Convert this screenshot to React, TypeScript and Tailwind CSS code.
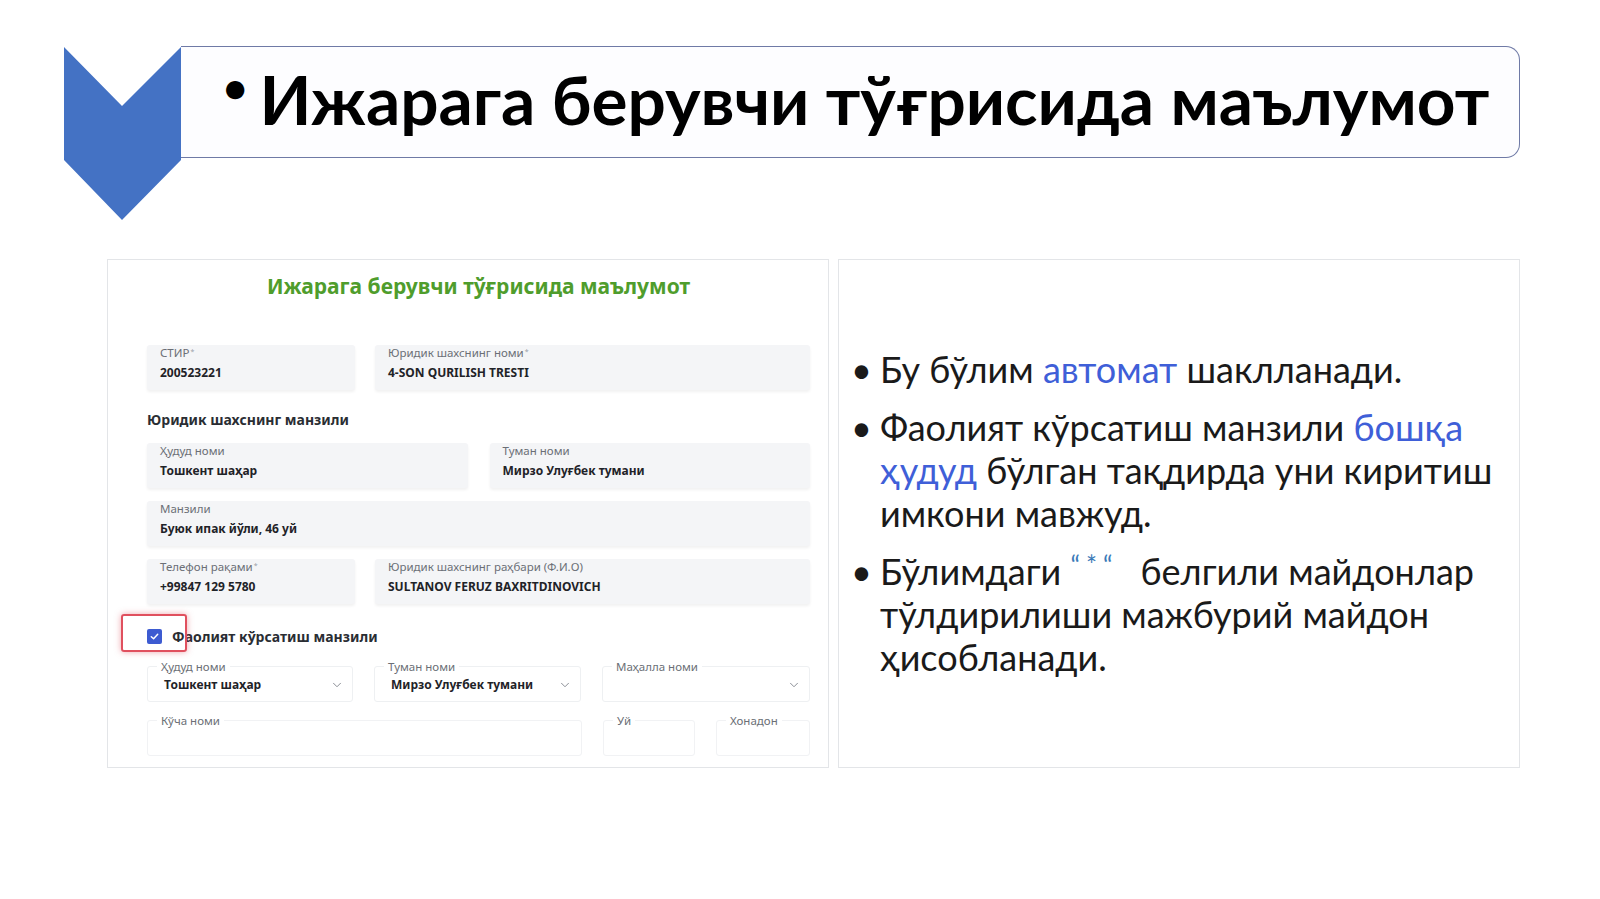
import { ChevronDown } from "lucide-react";

const formFont = { fontFamily: '"Noto Sans", "Open Sans", sans-serif' };

function Req() {
  return <sup className="text-[7px] text-[#9aa0a8] ml-[1px]">*</sup>;
}

function Field({ label, value, req = false, className = "" }: { label: string; value: string; req?: boolean; className?: string }) {
  return (
    <div className={`h-[45px] rounded-[3px] bg-[#f4f5f7] shadow-[0_2px_3px_rgba(0,0,0,0.06)] pl-[13px] pt-[1px] ${className}`}>
      <div className="text-[11.5px] leading-[14px] text-[#6b6f76]">
        {label}
        {req && <Req />}
      </div>
      <div className="mt-[5px] text-[12px] leading-[15px] font-bold text-[#1f2328]">{value}</div>
    </div>
  );
}

function SelectField({ label, value, className = "" }: { label: string; value: string; className?: string }) {
  return (
    <div className={`relative h-[36px] mt-[6px] border border-[#eef0f2] rounded-[3px] ${className}`}>
      <span className="absolute -top-[8px] left-[9px] bg-white px-[4px] text-[11.5px] leading-[15px] text-[#6b6f76]">{label}</span>
      <div className="flex h-full items-center justify-between pl-[16px] pr-[8px] pt-[2px]">
        <span className="text-[12px] font-bold text-[#1f2328]">{value}</span>
        <ChevronDown className="h-[14px] w-[14px] text-[#7a7f87]" strokeWidth={1.5} />
      </div>
    </div>
  );
}

function EmptyField({ label, className = "" }: { label: string; className?: string }) {
  return (
    <div className={`relative h-[36px] mt-[6px] border border-[#f1f2f4] rounded-[3px] ${className}`}>
      <span className="absolute -top-[8px] left-[9px] bg-white px-[4px] text-[11.5px] leading-[15px] text-[#6b6f76]">{label}</span>
    </div>
  );
}

export default function App() {
  return (
    <div className="w-[1600px] h-[899px] bg-white overflow-hidden relative">
      {/* header */}
      <div className="flex pl-[64px] pt-[46px] pr-[80px]">
        <svg width="117" height="174" viewBox="0 0 117 174" className="shrink-0">
          <polygon points="0,1 58,60 117,1 117,114 58,174 0,114" fill="#4472c4" />
        </svg>
        <div className="flex-1 h-[112px] border border-l-0 border-[#6f7aa6] rounded-r-[14px] bg-[#fdfdff] flex items-center pl-[42px]" style={{ fontFamily: 'Lato, "Noto Sans", sans-serif' }}>
          <span className="text-[42px] leading-none font-bold text-black mr-[12px] -mt-[30px]">•</span>
          <span className="text-[67.5px] leading-none font-bold text-black -mt-[6px]">Ижарага берувчи тўғрисида маълумот</span>
        </div>
      </div>

      {/* panels */}
      <div className="flex pl-[107px] mt-[39px] gap-[9px]">
        <div className="relative w-[722px] h-[509px] border border-[#e3e5e8] pl-[39px] pr-[18px]" style={formFont}>
          <div className="mt-[12px] text-center text-[21px] leading-[28px] font-bold text-[#4f9d2c]">Ижарага берувчи тўғрисида маълумот</div>

          <div className="mt-[45px] flex gap-[20px]">
            <Field className="w-[208px]" label="СТИР" req value="200523221" />
            <Field className="flex-1" label="Юридик шахснинг номи" req value="4-SON QURILISH TRESTI" />
          </div>

          <div className="mt-[20px] text-[14px] leading-[20px] font-bold text-[#2a2d33]">Юридик шахснинг манзили</div>

          <div className="mt-[13px] flex gap-[22px]">
            <Field className="flex-1" label="Ҳудуд номи" value="Тошкент шаҳар" />
            <Field className="flex-1" label="Туман номи" value="Мирзо Улуғбек тумани" />
          </div>

          <Field className="mt-[13px]" label="Манзили" value="Буюк ипак йўли, 46 уй" />

          <div className="mt-[13px] flex gap-[20px]">
            <Field className="w-[208px]" label="Телефон рақами" req value="+99847 129 5780" />
            <Field className="flex-1" label="Юридик шахснинг раҳбари (Ф.И.О)" value="SULTANOV FERUZ BAXRITDINOVICH" />
          </div>

          <div className="mt-[22px] flex items-center h-[20px]">
            <span className="w-[15px] h-[15px] bg-[#3d5bd1] rounded-[2px] flex items-center justify-center mr-[10px]">
              <svg width="11" height="11" viewBox="0 0 12 12">
                <polyline points="2.5,6.2 5,8.5 9.5,3.5" fill="none" stroke="#fff" strokeWidth="1.6" strokeLinecap="round" strokeLinejoin="round" />
              </svg>
            </span>
            <span className="text-[14px] font-bold text-[#2a2d33]">Фаолият кўрсатиш манзили</span>
          </div>
          <div className="absolute left-[13px] top-[354px] w-[66px] h-[38px] border-2 border-[#e0505e] rounded-[3px] shadow-[0_0_6px_rgba(224,80,94,0.5)]" />

          <div className="mt-[14px] flex gap-[21px]">
            <SelectField className="w-[206px]" label="Ҳудуд номи" value="Тошкент шаҳар" />
            <SelectField className="w-[207px]" label="Туман номи" value="Мирзо Улуғбек тумани" />
            <SelectField className="flex-1" label="Маҳалла номи" value="" />
          </div>

          <div className="mt-[12px] flex gap-[21px]">
            <EmptyField className="w-[435px]" label="Кўча номи" />
            <EmptyField className="w-[92px]" label="Уй" />
            <EmptyField className="flex-1" label="Хонадон" />
          </div>
        </div>

        <div className="w-[682px] h-[509px] border border-[#e3e5e8] pl-[12px] pt-[88px]" style={{ fontFamily: 'Lato, "Noto Sans", sans-serif' }}>
          <ul className="text-[36px] leading-[43px] text-[#1a1a1a] space-y-[15px] pr-[20px]">
            <li className="flex">
              <span className="w-[29px] shrink-0">•</span>
              <span>Бу бўлим <span className="text-[#3f5fd8]">автомат</span> шаклланади.</span>
            </li>
            <li className="flex">
              <span className="w-[29px] shrink-0">•</span>
              <span>Фаолият кўрсатиш манзили <span className="text-[#3f5fd8]">бошқа ҳудуд</span> бўлган тақдирда уни киритиш имкони мавжуд.</span>
            </li>
            <li className="flex">
              <span className="w-[29px] shrink-0">•</span>
              <span>
                Бўлимдаги{" "}
                <span className="inline-block align-top leading-[30px] text-[26px] text-[#3a7ab8] tracking-[6px] mr-[22px]">“*“</span>
                белгили майдонлар тўлдирилиши мажбурий майдон ҳисобланади.
              </span>
            </li>
          </ul>
        </div>
      </div>
    </div>
  );
}
